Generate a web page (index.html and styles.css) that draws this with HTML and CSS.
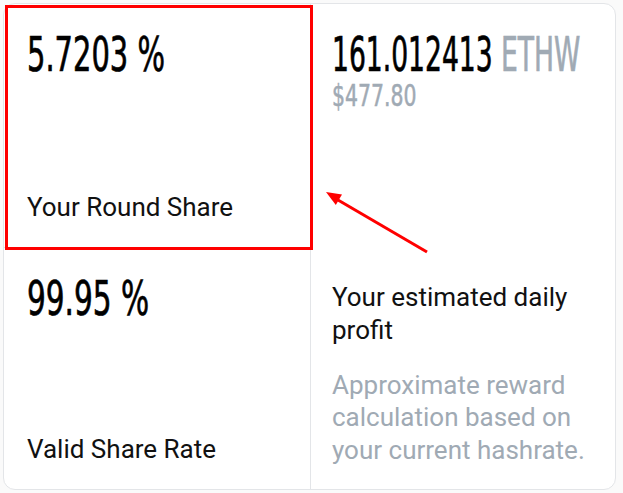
FILE: index.html
```html
<!DOCTYPE html>
<html lang="en">
<head>
<meta charset="utf-8">
<title>Round share</title>
<link rel="stylesheet" href="styles.css">
</head>
<body>
<div class="card">
  <div class="col-left">
    <div class="cell">
      <div class="big"><span class="fit fit-a">5.7203 %</span></div>
      <div class="label">Your Round Share</div>
    </div>
    <div class="cell">
      <div class="big"><span class="fit fit-b">99.95 %</span></div>
      <div class="label">Valid Share Rate</div>
    </div>
  </div>
  <div class="cell cell-right">
    <div class="values">
      <div class="big"><span class="fit fit-c">161.012413 <span class="muted">ETHW</span></span></div>
      <div class="sub"><span class="fit fit-d">$477.80</span></div>
    </div>
    <div class="desc">
      <div class="label">Your estimated daily profit</div>
      <p class="note">Approximate reward calculation based on your current hashrate.</p>
    </div>
  </div>
</div>
<svg class="annot" width="623" height="493" viewBox="0 0 623 493" aria-hidden="true">
  <rect x="6.5" y="6.5" width="305" height="242" fill="none" stroke="#ff0000" stroke-width="3"/>
  <line x1="427" y1="252" x2="338" y2="200" stroke="#ff0000" stroke-width="3"/>
  <polygon points="326,192 342,194.5 335.8,205" fill="#ff0000"/>
</svg>
</body>
</html>
```
FILE: styles.css
```css
html, body {
  margin: 0;
  padding: 0;
}
body {
  background: #fafafa;
  padding: 3px;
  font-family: Roboto, "Liberation Sans", sans-serif;
  color: #111;
}
.card {
  box-sizing: border-box;
  width: 613px;
  height: 487px;
  background: #fff;
  border: 1px solid #e3e5e8;
  border-radius: 12px;
  overflow: hidden;
  display: grid;
  grid-template-columns: 307px minmax(0, 1fr);
}
.col-left {
  display: grid;
  grid-template-rows: 1fr 1fr;
  border-right: 1px solid #e3e5e8;
  min-width: 0;
}
.col-left .cell + .cell {
  border-top: 1px solid #e3e5e8;
}
.cell {
  display: flex;
  flex-direction: column;
  justify-content: space-between;
  padding: 27px 12px 23px 23px;
  min-height: 0;
  min-width: 0;
}
.cell-right {
  padding-left: 21px;
}
.big {
  font-family: "DejaVu Sans Condensed", "Liberation Sans Narrow", Roboto, sans-serif;
  font-stretch: condensed;
  font-size: 47.5px;
  line-height: 1;
  color: #000;
  white-space: nowrap;
  -webkit-text-stroke: 0.7px currentColor;
}
.sub {
  font-family: "DejaVu Sans Condensed", "Liberation Sans Narrow", Roboto, sans-serif;
  font-stretch: condensed;
  font-size: 29.5px;
  line-height: 1;
  margin-top: 3px;
  color: #a0aab4;
  white-space: nowrap;
  -webkit-text-stroke: 0.5px currentColor;
}
.values,
.desc {
  min-width: 0;
}
.fit {
  display: inline-block;
  transform-origin: left center;
}
.fit-a { transform: scaleX(0.677); }
.fit-b { transform: scaleX(0.692); }
.fit-c { transform: scaleX(0.622); }
.fit-d { transform: scaleX(0.77); }
.muted {
  color: #a0aab4;
}
.label {
  font-size: 26px;
  line-height: 33px;
  color: #111;
}
.note {
  margin: 22px 0 0 0;
  font-size: 26px;
  line-height: 32.5px;
  color: #a0aab4;
}
.annot {
  position: absolute;
  left: 0;
  top: 0;
  pointer-events: none;
}
```
